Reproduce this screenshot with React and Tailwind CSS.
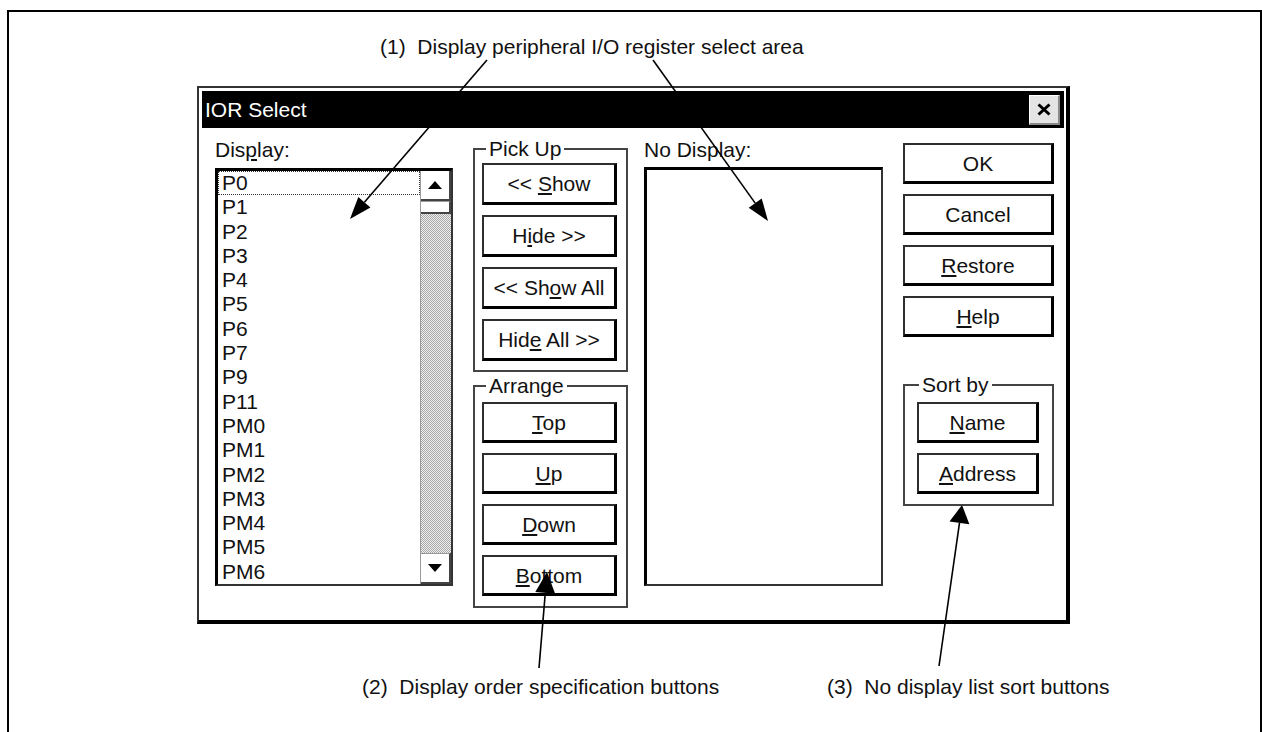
import React from 'react';

const items = ['P0', 'P1', 'P2', 'P3', 'P4', 'P5', 'P6', 'P7', 'P9', 'P11', 'PM0', 'PM1', 'PM2', 'PM3', 'PM4', 'PM5', 'PM6'];

function Btn({ children, className = '' }) {
  return (
    <div
      className={
        'flex items-center justify-center bg-white border-t-2 border-l-2 border-[#2e2e2e] border-b-[3px] border-r-[3px] border-b-black border-r-black text-[21px] leading-none ' +
        className
      }
    >
      <span className="whitespace-pre">{children}</span>
    </div>
  );
}

function Group({ label, legendClass, className = '', children }) {
  return (
    <fieldset className={'border-2 border-[#444] ' + className}>
      <legend className={'px-[3px] text-[21px] leading-[24px] ' + legendClass}>{label}</legend>
      {children}
    </fieldset>
  );
}

function Tri({ down }) {
  return (
    <svg width="14" height="8" viewBox="0 0 14 8">
      <polygon points={down ? '0,0 14,0 7,8' : '0,8 14,8 7,0'} fill="#000" />
    </svg>
  );
}

function Scrollbar() {
  return (
    <div className="flex w-[31px] flex-col border-l border-[#9a9a9a]">
      <div className="flex h-[30px] items-center justify-center bg-white border-r-2 border-b-2 border-[#444]">
        <Tri />
      </div>
      <div className="h-[13px] bg-white border-t border-[#999] border-b-2 border-b-[#444] border-r-2 border-r-[#444]" />
      <div className="flex-1 bg-[repeating-conic-gradient(#a9a9a9_0%_25%,#ededed_0%_50%)] bg-[length:2px_2px]" />
      <div className="flex h-[31px] items-center justify-center bg-white border-t border-[#999] border-r-2 border-b-2 border-r-[#444] border-b-[#444]">
        <Tri down />
      </div>
    </div>
  );
}

function Arrows() {
  return (
    <svg className="pointer-events-none absolute left-0 top-0" width="1262" height="732">
      <g stroke="#000" strokeWidth="1.6" fill="none">
        <line x1="487" y1="60" x2="364.4" y2="202.3" />
        <line x1="653" y1="60" x2="755.2" y2="203.1" />
        <line x1="539" y1="668" x2="545.3" y2="592.9" />
        <line x1="939" y1="666" x2="959.5" y2="522.8" />
      </g>
      <g fill="#000">
        <polygon points="350,219 370.4,207.6 358.3,197.1" />
        <polygon points="768,221 748.7,207.8 761.7,198.5" />
        <polygon points="547,572 555.2,593.7 535.3,592.1" />
        <polygon points="962,505 969.4,524.2 949.5,521.4" />
      </g>
    </svg>
  );
}

export default function App() {
  return (
    <div className="relative h-[732px] w-[1262px] overflow-hidden bg-white text-[#111] font-['Liberation_Sans',Arial,sans-serif]">
      <div className="ml-[7px] mt-[10px] h-[760px] w-[1255px] border-2 border-black">
        {/* caption 1 */}
        <div className="ml-[371px] mt-[23px] h-[24px] text-[21px] leading-[24px] whitespace-pre">
          {'(1)  Display peripheral I/O register select area'}
        </div>

        {/* dialog */}
        <div className="ml-[188px] mt-[27px] flex h-[538px] w-[873px] flex-col bg-white pt-[3px] pl-[3px] pr-[2px] border-t-2 border-l-2 border-[#333] border-r-4 border-b-4 border-r-black border-b-black">
          <div className="flex h-[37px] items-center justify-between bg-black pl-[3px] pr-[4px]">
            <span className="text-[21px] leading-none text-white">IOR Select</span>
            <div className="flex h-[30px] w-[31px] items-center justify-center bg-[#e4e4e4] border-t border-l border-white border-b-2 border-r-2 border-b-[#8a8a8a] border-r-[#8a8a8a]">
              <svg width="14" height="13" viewBox="0 0 14 13">
                <path d="M1.5 1.5 L12.5 11.5 M12.5 1.5 L1.5 11.5" stroke="#000" strokeWidth="3" />
              </svg>
            </div>
          </div>

          <div className="flex items-start pl-[13px]">
            {/* display list */}
            <div className="w-[238px]">
              <div className="mt-[10px] h-[24px] text-[21px] leading-[24px]">
                Dis<span className="underline underline-offset-2">p</span>lay:
              </div>
              <div className="mt-[6px] flex h-[418px] bg-white border-t-[3px] border-l-[3px] border-black border-r-2 border-b-2 border-r-[#333] border-b-[#333]">
                <div className="flex flex-1 flex-col">
                  {items.map((t, i) => (
                    <div
                      key={t}
                      className={
                        i === 0
                          ? 'h-[24.3px] border border-dotted border-[#333] pl-[3px] text-[21px] leading-[22.3px]'
                          : 'h-[24.3px] pl-[4px] text-[21px] leading-[24.3px]'
                      }
                    >
                      {t}
                    </div>
                  ))}
                </div>
                <Scrollbar />
              </div>
            </div>

            {/* pick up / arrange */}
            <div className="ml-[20px] flex w-[155px] flex-col">
              <Group label="Pick Up" legendClass="ml-[11px]" className="mt-[9px]">
                <div className="ml-[7px] mt-[2px] mb-[9px] flex w-[135px] flex-col gap-[10px]">
                  <Btn className="h-[42px]">
                    {'<< '}<span className="underline underline-offset-2">S</span>how
                  </Btn>
                  <Btn className="h-[42px]">
                    H<span className="underline underline-offset-2">i</span>{'de >>'}
                  </Btn>
                  <Btn className="h-[42px]">
                    {'<< Sh'}<span className="underline underline-offset-2">o</span>{'w All'}
                  </Btn>
                  <Btn className="h-[42px]">
                    Hid<span className="underline underline-offset-2">e</span>{' All >>'}
                  </Btn>
                </div>
              </Group>
              <Group label="Arrange" legendClass="ml-[11px]" className="mt-[2px]">
                <div className="ml-[7px] mt-[4px] mb-[10px] flex w-[135px] flex-col gap-[10px]">
                  <Btn className="h-[41px]">
                    <span className="underline underline-offset-2">T</span>op
                  </Btn>
                  <Btn className="h-[41px]">
                    <span className="underline underline-offset-2">U</span>p
                  </Btn>
                  <Btn className="h-[41px]">
                    <span className="underline underline-offset-2">D</span>own
                  </Btn>
                  <Btn className="h-[41px]">
                    <span className="underline underline-offset-2">B</span>ottom
                  </Btn>
                </div>
              </Group>
            </div>

            {/* no display list */}
            <div className="ml-[16px] w-[239px]">
              <div className="mt-[10px] h-[24px] text-[21px] leading-[24px]">No Display:</div>
              <div className="mt-[5px] h-[419px] bg-white border-t-[3px] border-l-[3px] border-black border-r-2 border-b-2 border-r-[#333] border-b-[#333]" />
            </div>

            {/* right buttons */}
            <div className="ml-[20px] flex w-[151px] flex-col">
              <div className="mt-[15px] flex flex-col gap-[10px]">
                <Btn className="h-[41px]">OK</Btn>
                <Btn className="h-[41px]">Cancel</Btn>
                <Btn className="h-[41px]">
                  <span className="underline underline-offset-2">R</span>estore
                </Btn>
                <Btn className="h-[41px]">
                  <span className="underline underline-offset-2">H</span>elp
                </Btn>
              </div>
              <Group label="Sort by" legendClass="ml-[14px]" className="mt-[36px]">
                <div className="ml-[12px] mt-[5px] mb-[10px] flex w-[122px] flex-col gap-[10px]">
                  <Btn className="h-[41px]">
                    <span className="underline underline-offset-2">N</span>ame
                  </Btn>
                  <Btn className="h-[41px]">
                    <span className="underline underline-offset-2">A</span>ddress
                  </Btn>
                </div>
              </Group>
            </div>
          </div>
        </div>

        {/* bottom captions */}
        <div className="mt-[51px] flex text-[21px] leading-[24px] whitespace-pre">
          <div className="ml-[353px] w-[465px]">{'(2)  Display order specification buttons'}</div>
          <div>{'(3)  No display list sort buttons'}</div>
        </div>
      </div>
      <Arrows />
    </div>
  );
}
